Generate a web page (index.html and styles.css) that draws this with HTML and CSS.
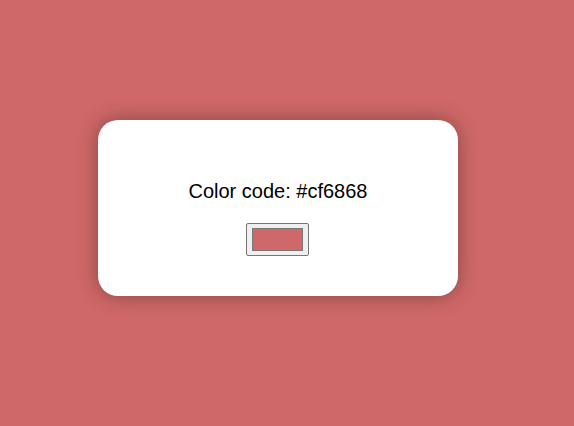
FILE: index.html
```html
<!DOCTYPE html>
<html>
<head>
<meta charset="utf-8">
<link rel="stylesheet" href="styles.css">
</head>
<body>
<div class="page">
  <div class="card">
    <p class="code">Color code: #cf6868</p>
    <input class="picker" type="color" value="#cf6868">
  </div>
</div>
</body>
</html>
```
FILE: styles.css
```css
html, body {
  margin: 0;
  padding: 0;
  background: #cf6868;
  height: 100%;
}
.page {
  padding: 120px 0 0 98px;
}
.card {
  width: 360px;
  height: 176px;
  box-sizing: border-box;
  background: #ffffff;
  border-radius: 20px;
  box-shadow: 0 0 20px rgba(0, 0, 0, 0.35);
  padding-top: 60px;
  text-align: center;
  font-family: "Liberation Sans", Arial, sans-serif;
}
.code {
  margin: 0 0 20px;
  font-size: 20px;
  line-height: 23px;
  color: #000;
}
.picker {
  display: block;
  margin: 0 0 0 148px;
  width: 63px;
  height: 33px;
  box-sizing: border-box;
  padding: 0;
  border: 1px solid #767676;
  border-radius: 2px;
  background: #efefef;
}
.picker::-webkit-color-swatch-wrapper {
  padding: 4px 5px;
}
.picker::-webkit-color-swatch {
  border: 1px solid #777777;
  border-radius: 0;
}
```
